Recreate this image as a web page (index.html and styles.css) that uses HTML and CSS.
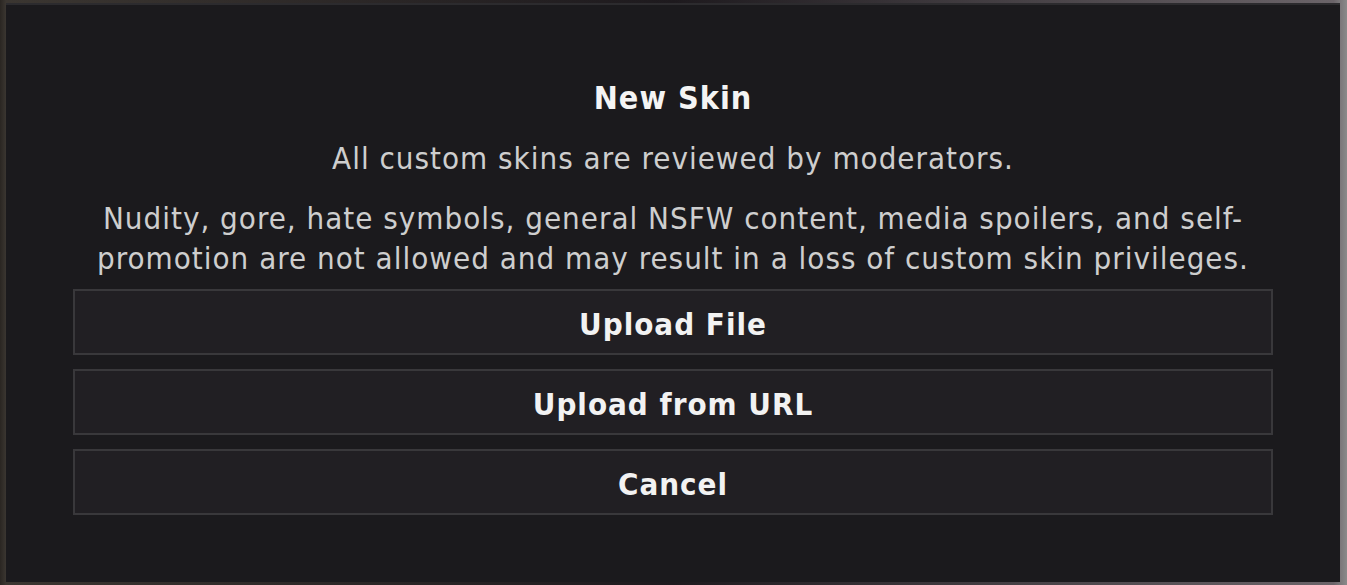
FILE: index.html
```html
<!DOCTYPE html>
<html lang="en">

<head>
    <meta charset="UTF-8">
    <meta name="viewport" content="width=device-width, initial-scale=1.0">
    <link rel="stylesheet" href="styles.css">
    <title>New Skin</title>
</head>

<body>
    <div class="wrapper">
        <div class="modal">
            <div class="modal_head">
                <h1 class="title">New Skin</h1>
                <p class="subtitle">All custom skins are reviewed by moderators.</p>
                <p class="rules">Nudity, gore, hate symbols, general NSFW content, media spoilers, and self-promotion are not allowed and may result in a loss of custom skin privileges.</p>
            </div>
            <div class="buttons">
                <button class="btn">Upload File</button>
                <button class="btn">Upload from URL</button>
                <button class="btn">Cancel</button>
            </div>
        </div>
    </div>
</body>

</html>
```

FILE: styles.css
```css
* {
    margin: 0px;
    padding: 0px;
    box-sizing: border-box;
}

body {
    width: 1347px;
    height: 585px;
    overflow: hidden;
    background: linear-gradient(90deg, #2a2622 0px, #3b3631 6px, #1e1a1e 50%, #6b6469 99%, #8a8a8a 100%);
    font-family: "DejaVu Sans Condensed", "DejaVu Sans", sans-serif;
}

.wrapper {
    width: 100%;
    height: 100%;
    padding: 3px 7px 3px 6px;
}

.modal {
    width: 100%;
    height: 100%;
    background: #1b1a1d;
    border-top: 2px solid #2c2b2e;
    display: flex;
    flex-direction: column;
    align-items: center;
    padding-top: 73px;
}

.modal_head {
    width: 1200px;
    display: flex;
    flex-direction: column;
    align-items: center;
    text-align: center;
}

.title {
    font-size: 32px;
    font-weight: 700;
    letter-spacing: 1px;
    color: #f4f4f4;
    line-height: 40px;
}

.subtitle {
    margin-top: 20px;
    font-size: 31px;
    letter-spacing: 1px;
    color: #cecece;
    line-height: 40px;
}

.rules {
    margin-top: 20px;
    font-size: 31px;
    letter-spacing: 1px;
    color: #cecece;
    line-height: 40px;
    width: 1180px;
}

.buttons {
    width: 1200px;
    display: flex;
    flex-direction: column;
    gap: 14px;
    margin-top: 11px;
}

.btn {
    width: 100%;
    height: 66px;
    padding-top: 4px;
    background: #211f23;
    border: 2px solid #39383b;
    color: #f2f2f2;
    font-family: "DejaVu Sans Condensed", "DejaVu Sans", sans-serif;
    font-size: 31px;
    font-weight: 700;
    letter-spacing: 1px;
}
```
